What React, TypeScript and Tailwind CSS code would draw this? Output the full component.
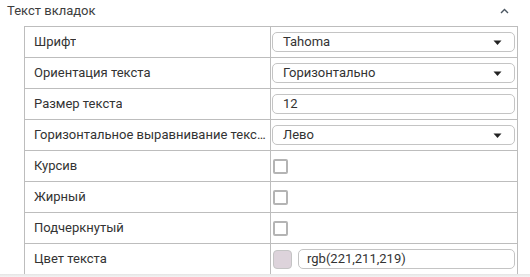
import React from "react";

const Arrow = () => (
  <svg width="9" height="6" viewBox="0 0 9 6" className="absolute right-[12px] top-[7px]">
    <path d="M0.5 0.5 L8.5 0.5 L4.5 5 Z" fill="#222" />
  </svg>
);

const Select = ({ value }: { value: string }) => (
  <div className="relative mx-[1px] h-[20px] w-full rounded-[5px] border border-[#c4c4c4] bg-white pl-[10px] text-[13px] leading-[18px] text-[#333]">
    {value}
    <Arrow />
  </div>
);

const Input = ({ value, pl = "pl-[8px]" }: { value: string; pl?: string }) => (
  <div className={`mx-[1px] h-[20px] w-full rounded-[5px] border border-[#c4c4c4] bg-white ${pl} text-[13px] leading-[18px] text-[#333]`}>
    {value}
  </div>
);

const Check = () => (
  <div className="ml-[2px] h-[15px] w-[15px] rounded-[2px] border-2 border-[#b4b4b4] bg-white" />
);

const Row = ({ label, children }: { label: string; children: React.ReactNode }) => (
  <div className="flex h-[31px] border-b border-[#bdbdbd]">
    <div className="flex w-[245px] shrink-0 items-center overflow-hidden pl-[9px] pr-[2px]">
      <span className="truncate text-[13px] text-[#333]">{label}</span>
    </div>
    <div className="flex flex-1 items-center border-l border-[#bdbdbd] pr-[1px]">{children}</div>
  </div>
);

export default function App() {
  return (
    <div
      className="relative h-[277px] w-[530px] overflow-hidden bg-white"
      style={{ fontFamily: "Roboto, 'Noto Sans', sans-serif" }}
    >
      <div className="flex h-[26px] items-start justify-between pl-[7px] pr-[21px] pt-[2px]">
        <span className="text-[13px] leading-[18px] text-[#3d3d3d]">Текст вкладок</span>
        <svg width="9" height="6" viewBox="0 0 9 6" className="mt-[6px]">
          <path d="M1 5 L4.5 1.5 L8 5" fill="none" stroke="#4a5560" strokeWidth="1.4" />
        </svg>
      </div>
      <div className="ml-[24px] w-[494px] border-x border-t border-[#bdbdbd]">
        <Row label="Шрифт">
          <Select value="Tahoma" />
        </Row>
        <Row label="Ориентация текста">
          <Select value="Горизонтально" />
        </Row>
        <Row label="Размер текста">
          <Input value="12" pl="pl-[10px]" />
        </Row>
        <Row label="Горизонтальное выравнивание текста">
          <Select value="Лево" />
        </Row>
        <Row label="Курсив">
          <Check />
        </Row>
        <Row label="Жирный">
          <Check />
        </Row>
        <Row label="Подчеркнутый">
          <Check />
        </Row>
        <Row label="Цвет текста">
          <div className="ml-[2px] mr-[5px] h-[19px] w-[19px] shrink-0 rounded-[4px] border border-[#c4c4c4] bg-[rgb(221,211,219)]" />
          <Input value="rgb(221,211,219)" />
        </Row>
      </div>
      <div className="absolute bottom-0 left-0 h-[3px] w-full bg-gradient-to-b from-[#e4e4e4] to-[#f4f4f4]" />
    </div>
  );
}
